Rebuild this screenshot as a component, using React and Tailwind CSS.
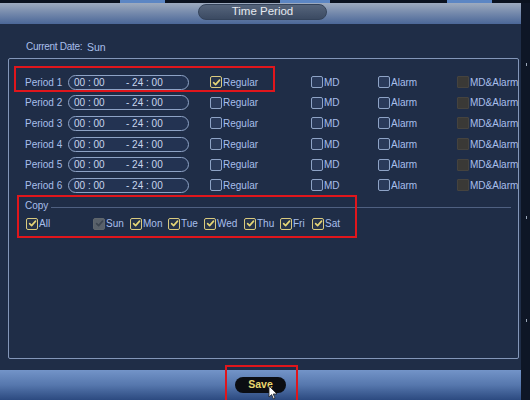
import React from 'react';

// ─── Data ────────────────────────────────────────────────────────────────────

const PERIODS = [1, 2, 3, 4, 5, 6];

const DAYS = [
  { label: 'Sun', width: 'w-[37px]', state: 'disabled' },
  { label: 'Mon', width: 'w-[38px]', state: 'on' },
  { label: 'Tue', width: 'w-[36px]', state: 'on' },
  { label: 'Wed', width: 'w-[40px]', state: 'on' },
  { label: 'Thu', width: 'w-[36px]', state: 'on' },
  { label: 'Fri', width: 'w-[32px]', state: 'on' },
  { label: 'Sat', width: 'w-[40px]', state: 'on' },
];

// ─── Bits ────────────────────────────────────────────────────────────────────

function Box({ state = 'off' }) {
  if (state === 'on') {
    return (
      <span className="flex h-[12px] w-[12px] shrink-0 items-center justify-center rounded-[2px] border border-[#d9ca7e] bg-[#26334a]">
        <svg width="9" height="9" viewBox="0 0 10 10" fill="none" stroke="#e6d676" strokeWidth="1.8" strokeLinecap="round" strokeLinejoin="round">
          <path d="M1.8 5.2 4 7.4 8.4 2.4" />
        </svg>
      </span>
    );
  }
  if (state === 'disabled') {
    return (
      <span className="flex h-[12px] w-[12px] shrink-0 items-center justify-center rounded-[2px] border border-[#5f666c] bg-[#59616a]">
        <svg width="9" height="9" viewBox="0 0 10 10" fill="none" stroke="#3c4550" strokeWidth="1.8" strokeLinecap="round" strokeLinejoin="round">
          <path d="M1.8 5.2 4 7.4 8.4 2.4" />
        </svg>
      </span>
    );
  }
  if (state === 'dim') {
    return <span className="h-[12px] w-[12px] shrink-0 rounded-[1px] border border-[#45433f] bg-[#3a3936]" />;
  }
  return <span className="h-[12px] w-[12px] shrink-0 rounded-[2px] border border-[#8ea3c6] bg-[#2a3a5a]" />;
}

function Check({ state, label, className = '' }) {
  return (
    <div className={`flex items-center gap-[1px] ${className}`}>
      <Box state={state} />
      <span className="whitespace-nowrap">{label}</span>
    </div>
  );
}

function TimeRange() {
  return (
    <div className="flex h-[15px] w-[121px] shrink-0 items-center rounded-full border border-[#8ea3c6] bg-[#233352] pl-[5px] text-[#c9d6ee] whitespace-pre">
      <span className="w-[52px]">00 : 00</span>
      <span>- 24 : 00</span>
    </div>
  );
}

// ─── Page ────────────────────────────────────────────────────────────────────

export default function App() {
  return (
    <div
      className="relative flex h-[400px] w-[530px] flex-col overflow-hidden bg-[#0b121f] text-[10px] text-[#a8bfeb]"
      style={{ fontFamily: '"Liberation Sans", Arial, sans-serif' }}
    >
      {/* strip of the screen behind the dialog */}
      <div className="flex h-[3px] shrink-0 bg-[#0b121f]">
        <div className="ml-[120px] w-[45px] bg-[#5c86c4]" />
        <div className="ml-[115px] w-[50px] bg-[#5c86c4]" />
        <div className="ml-[117px] w-[45px] bg-[#5c86c4]" />
      </div>

      <div className="flex flex-1">
        {/* Dialog */}
        <div className="flex w-[521px] flex-col">
          {/* Header */}
          <div className="flex h-[21px] shrink-0 items-start bg-gradient-to-b from-[#9eabbf] via-[#7388ab] to-[#4b6798] pl-[198px] pt-[1px]">
            <div className="flex h-[16px] w-[129px] items-center justify-center rounded-full border border-[#34435a] bg-gradient-to-b from-[#56657c] to-[#3b4a62] text-[11.5px] text-[#e6eaf0]">
              Time Period
            </div>
          </div>

          {/* Body */}
          <div className="flex flex-1 flex-col bg-[#1f2d47] pt-[16px]">
            <div className="flex h-[14px] items-center whitespace-nowrap pl-[26px] leading-[14px]">
              <span className="w-[61px] shrink-0 tracking-[-0.3px]">Current Date:</span>
              <span className="text-[10.5px]">Sun</span>
            </div>

            <div className="ml-[8px] mt-[4px] flex h-[301px] w-[511px] flex-col overflow-hidden rounded-[2px] border border-[#8396b8] pt-[13px]">
              {PERIODS.map((n) => (
                <div key={n} className="flex h-[20.6px] items-center pl-[16px]">
                  <span className="w-[43px] shrink-0 whitespace-nowrap">Period {n}</span>
                  <TimeRange />
                  <Check state={n === 1 ? 'on' : 'off'} label="Regular" className="ml-[21px] w-[101px] shrink-0" />
                  <Check state="off" label="MD" className="w-[67px] shrink-0" />
                  <Check state="off" label="Alarm" className="w-[79px] shrink-0" />
                  <Check state="dim" label="MD&Alarm" className="shrink-0" />
                </div>
              ))}

              {/* Copy */}
              <div className="mt-[3px] flex h-[14px] items-center pl-[16px]">
                <span>Copy</span>
                <div className="ml-[3px] mr-[7px] mt-[3px] h-px flex-1 bg-[#4f6081]" />
              </div>
              <div className="mt-[4px] flex h-[14px] items-center pl-[17px]">
                <Check state="on" label="All" className="w-[67px] shrink-0" />
                {DAYS.map((d) => (
                  <Check key={d.label} state={d.state} label={d.label} className={`${d.width} shrink-0`} />
                ))}
              </div>
            </div>
          </div>

          {/* Footer */}
          <div className="flex h-[30px] shrink-0 items-start justify-center bg-gradient-to-b from-[#7394c8] via-[#5677ad] to-[#2c4a80] pt-[7px]">
            <button className="flex h-[16px] w-[51px] items-center justify-center rounded-full bg-[#0b0d12] text-[10.5px] font-bold text-[#e8d66e]">
              Save
            </button>
          </div>
        </div>

        {/* right edge of screen */}
        <div className="flex flex-1 flex-col bg-[#0e1626]">
          <div className="ml-[5px] mt-[60px] h-[3px] w-px bg-[#9aa6b8]" />
          <div className="ml-[5px] mt-[150px] h-[3px] w-px bg-[#9aa6b8]" />
          <div className="ml-[5px] mt-[100px] h-[3px] w-px bg-[#9aa6b8]" />
        </div>
      </div>

      {/* annotation boxes */}
      <div className="pointer-events-none absolute left-[14px] top-[66px] h-[26px] w-[261px] border-2 border-[#e0161c]" />
      <div className="pointer-events-none absolute left-[17px] top-[195px] h-[43px] w-[340px] border-2 border-[#e0161c]" />
      <div className="pointer-events-none absolute left-[225px] top-[365px] h-[40px] w-[73px] border-2 border-[#e0161c]" />

      {/* mouse cursor */}
      <svg className="absolute left-[268px] top-[385px]" width="10" height="15" viewBox="0 0 10 15">
        <path d="M1 1v11l2.6-2.4 1.8 4.2 1.6-.7-1.8-4.1H9z" fill="#fff" stroke="#222" strokeWidth="0.8" />
      </svg>
    </div>
  );
}
